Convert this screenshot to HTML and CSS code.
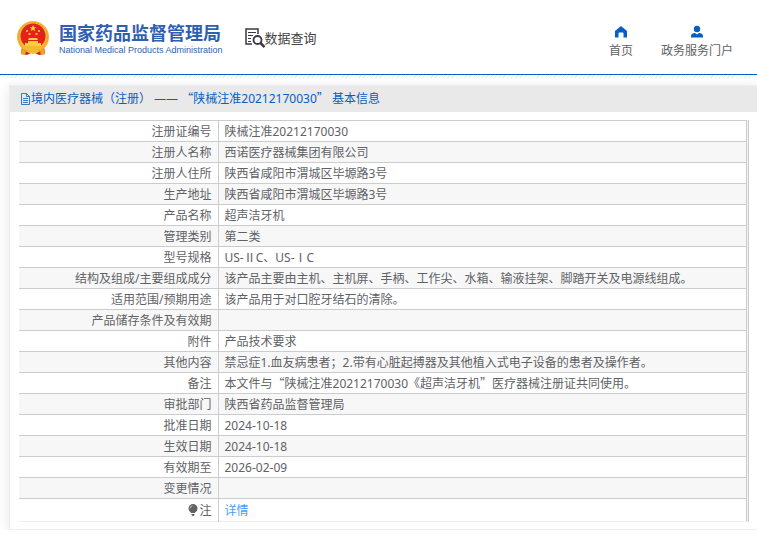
FILE: index.html
```html
<!DOCTYPE html>
<html lang="zh">
<head>
    <meta charset="UTF-8">
    <meta name="viewport" content="width=device-width, initial-scale=1.0">
    <title>国家药品监督管理局 数据查询</title>
    <link rel="stylesheet" href="styles.css">
</head>
<body>
    <header class="header">
        <a class="logo" href="#">
            <svg class="emblem" viewBox="0 0 32 34" aria-hidden="true">
                <path d="M5 25 L4 33 L10 34 L16 31 L22 34 L28 33 L27 25z" fill="#d9251c"/>
                <circle cx="16" cy="16" r="16" fill="#f3b83a"/>
                <circle cx="16" cy="16" r="14.5" fill="none" stroke="#e5a028" stroke-width="1" stroke-dasharray="2 1"/>
                <circle cx="16" cy="15" r="12.5" fill="#e3221b"/>
                <path d="M16 4l1 2.300h2.400l-1.900 1.500.7 2.400-2.200-1.400-2.200 1.400.7-2.400-1.900-1.500H15z" fill="#f8cf3c"/>
                <path d="M9 9h2v2H9zM21 9h2v2h-2zM11.500 12h2v2h-2zM18.500 12h2v2h-2z" fill="#f5b52c"/>
                <path d="M12 17h8l1 2h-10zM11 20h10v2h3v3H8v-3h3z" fill="#f8cf3c"/>
                <path d="M5 25h22l-3 3H8z" fill="#f3bb30"/>
                <path d="M12 28h8l2 3-6 2-6-2z" fill="#f3bb30"/>
                <path d="M5 28l4 2-1 4-4-1zM27 28l-4 2 1 4 4-1z" fill="#e9a924"/>
            </svg>
            <span class="logo-text">
                <span class="logo-cn">国家药品监督管理局</span>
                <span class="logo-en">National Medical Products Administration</span>
            </span>
        </a>
        <a class="query" href="#">
            <svg class="query-icon" viewBox="0 0 20 20" fill="none" stroke="#3a3847" aria-hidden="true">
                <path d="M7 16H1V1h12v5" stroke-width="1.500"/>
                <path d="M3 4.500h8M3 7.500h5M3 10.500h3M3 13.500h3" stroke-width="1.200"/>
                <circle cx="12.500" cy="12" r="4" stroke-width="1.800"/>
                <path d="M15.500 15l4 4" stroke-width="2.500"/>
            </svg>
            <span>数据查询</span>
        </a>
        <nav class="nav">
            <a href="#">
                <svg class="nav-icon" viewBox="0 0 14 14" aria-hidden="true"><path d="M7 1L1 6v6.500h3.500V8.500a1 1 0 0 1 1-1h3a1 1 0 0 1 1 1v4H13V6z" fill="#0560c2"/></svg>
                <span>首页</span>
            </a>
            <a href="#">
                <svg class="nav-icon" viewBox="0 0 14 14" aria-hidden="true"><circle cx="7" cy="4" r="3.200" fill="#0560c2"/><path d="M1 12.500V11c0-2 2-3 4-3l2 1.500L9 8c2 0 4 1 4 3v1.500z" fill="#0560c2"/></svg>
                <span>政务服务门户</span>
            </a>
        </nav>
    </header>
    <div class="hatch"></div>

    <main class="panel">
        <h1 class="panel-title">
            <svg class="doc-icon" viewBox="0 0 11 12" fill="none" stroke="#0560c2" stroke-width=".8" aria-hidden="true"><path d="M1.500 .5h5l3 3v8h-8zM6.500 .5v3h3M3 5.500h5M3 7.500h5M3 9.500h5"/></svg>
            <span>境内医疗器械（注册） —— <span class="quote">“</span>陕械注准20212170030<span class="quote">”</span> 基本信息</span>
        </h1>
        <div class="panel-body">
            <div class="table-wrap">
                <table class="info">
                    <tr><th scope="row">注册证编号</th><td>陕械注准20212170030</td></tr>
                    <tr><th scope="row">注册人名称</th><td>西诺医疗器械集团有限公司</td></tr>
                    <tr><th scope="row">注册人住所</th><td>陕西省咸阳市渭城区毕塬路3号</td></tr>
                    <tr><th scope="row">生产地址</th><td>陕西省咸阳市渭城区毕塬路3号</td></tr>
                    <tr><th scope="row">产品名称</th><td>超声洁牙机</td></tr>
                    <tr><th scope="row">管理类别</th><td>第二类</td></tr>
                    <tr><th scope="row">型号规格</th><td>US-ⅡC、US-ⅠC</td></tr>
                    <tr><th scope="row">结构及组成/主要组成成分</th><td>该产品主要由主机、主机屏、手柄、工作尖、水箱、输液挂架、脚踏开关及电源线组成。</td></tr>
                    <tr><th scope="row">适用范围/预期用途</th><td>该产品用于对口腔牙结石的清除。</td></tr>
                    <tr><th scope="row">产品储存条件及有效期</th><td></td></tr>
                    <tr><th scope="row">附件</th><td>产品技术要求</td></tr>
                    <tr><th scope="row">其他内容</th><td>禁忌症1.血友病患者；2.带有心脏起搏器及其他植入式电子设备的患者及操作者。</td></tr>
                    <tr><th scope="row">备注</th><td>本文件与<span class="quote">“</span>陕械注准20212170030《超声洁牙机<span class="quote">”</span>医疗器械注册证共同使用。</td></tr>
                    <tr><th scope="row">审批部门</th><td>陕西省药品监督管理局</td></tr>
                    <tr><th scope="row">批准日期</th><td>2024-10-18</td></tr>
                    <tr><th scope="row">生效日期</th><td>2024-10-18</td></tr>
                    <tr><th scope="row">有效期至</th><td>2026-02-09</td></tr>
                    <tr><th scope="row">变更情况</th><td></td></tr>
                    <tr class="note">
                        <th scope="row"><svg class="bulb" viewBox="0 0 10 12" aria-hidden="true"><path d="M5 0a4.500 4.500 0 0 0-2 8.500V9h4v-.5A4.500 4.500 0 0 0 5 0zM3.500 10h3v1l-1 1h-1l-1-1z" fill="#606266"/><path d="M2 4.500Q2.300 2 4.500 1.800" fill="none" stroke="#ddd" stroke-width=".8"/></svg>注</th>
                        <td><a href="#">详情</a></td>
                    </tr>
                </table>
            </div>
        </div>
    </main>
</body>
</html>
```
FILE: styles.css
```css
* {
    box-sizing: border-box;
}
body {
    margin: 0;
    background: #fff;
    color: #606266;
    font-family: "Noto Sans", "Noto Sans CJK SC", sans-serif;
    font-size: 12px;
    line-height: 18px;
}
a {
    color: inherit;
    text-decoration: none;
}
svg {
    flex-shrink: 0;
}
/* full-width quotes */
.quote {
    font-family: "Noto Sans CJK SC", sans-serif;
    line-height: 1;
}

/* header */
.header {
    display: flex;
    align-items: center;
    height: 75px;
    padding: 2px 24px 0 17px;
    border-bottom: 1px solid #0560c2;
}
.hatch {
    height: 3px;
    background: repeating-linear-gradient(135deg, #ececec 0, #ececec 1px, #fff 1px, #fff 3px);
}
.logo {
    display: flex;
    align-items: center;
    gap: 10px;
}
.emblem {
    width: 32px;
    height: 34px;
}
.logo-text {
    display: flex;
    flex-direction: column;
    padding-top: 2px;
    color: #2f5fb0;
    white-space: nowrap;
}
.logo-cn {
    font-size: 18px;
    font-weight: bold;
    line-height: 22px;
}
.logo-en {
    font-family: "Liberation Sans", Arial, sans-serif;
    font-size: 9px;
    line-height: 12px;
}
.query {
    display: flex;
    align-items: center;
    margin-left: 22px;
    color: #444;
    font-size: 13px;
    white-space: nowrap;
}
.query-icon {
    width: 20px;
    height: 20px;
}
.nav {
    display: flex;
    gap: 28px;
    margin-left: auto;
    padding-top: 8px;
}
.nav a {
    display: flex;
    flex-direction: column;
    align-items: center;
    gap: 3px;
    white-space: nowrap;
}
.nav-icon {
    width: 14px;
    height: 14px;
}

/* detail panel */
.panel {
    margin: 7px 0 0 9px;
    border: 1px solid #ebeef5;
    border-right: 0;
    box-shadow: 0 2px 12px rgba(0, 0, 0, 0.1);
}
.panel-title {
    display: flex;
    align-items: center;
    margin: 0;
    padding: 4px 10px;
    background: #e9e9e9;
    color: #0560c2;
    font-size: 12px;
    font-weight: normal;
}
.doc-icon {
    width: 11px;
    height: 12px;
}
.panel-body {
    padding: 8px 8px 7px 9px;
}
.table-wrap {
    padding-right: 1px;
    border-right: 1px solid #ccc;
    background: #f0f0f5;
}
.info {
    width: 100%;
    border-collapse: collapse;
    border-right: 1px solid #ccc;
    border-bottom: 1px solid #ebeef5;
    background: #fff;
}
.info th,
.info td {
    height: 21px;
    padding: 2px 6px 0;
    border-top: 1px solid #ccc;
    font-weight: normal;
    text-align: left;
}
.info th {
    width: 199px;
    border-right: 1px solid #ccc;
    text-align: right;
    white-space: nowrap;
}
.info tr:nth-child(even) {
    background: #f7f7f7;
}
.info .note th,
.info .note td {
    height: 23px;
}
.note a {
    color: #409eff;
}
.bulb {
    width: 10px;
    height: 12px;
    margin-right: 1px;
    vertical-align: -1px;
}
```
